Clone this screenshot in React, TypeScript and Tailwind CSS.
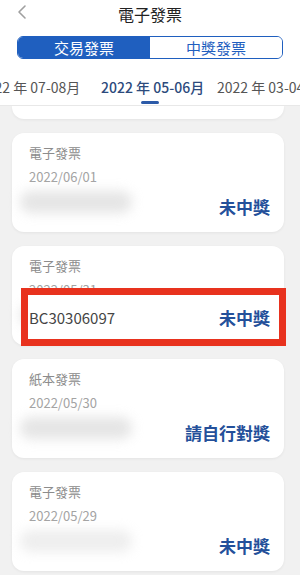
import React from "react";

const font = { fontFamily: '"Noto Sans CJK TC", "Noto Sans", Roboto, sans-serif' };

function Card({ kind, date, status, blurOpacity = "opacity-60" }: { kind: string; date: string; status: string; blurOpacity?: string }) {
  return (
    <div className="relative h-[99px] rounded-[12px] bg-white shadow-[0_1px_3px_rgba(0,0,0,0.06)] pl-[17px] pr-[14px] pt-[10px]">
      <div className="text-[13px] leading-[20px] text-[#8c8c8c]">{kind}</div>
      <div className="mt-[4px] text-[13px] leading-[20px] text-[#a3a3a3]">{date}</div>
      <div className={`absolute left-[8px] top-[58px] h-[22px] w-[112px] rounded-full bg-[#d4d4d4] blur-[6px] ${blurOpacity}`} />
      <div className="absolute right-[14px] top-[62px] text-[17px] font-bold leading-[24px] text-[#24509a]">{status}</div>
    </div>
  );
}

export default function App() {
  return (
    <div className="relative h-[575px] w-[300px] overflow-hidden bg-[#f1f1f1]" style={font}>
      <div className="bg-white">
        <div className="relative flex h-[28px] items-center justify-center">
          <svg className="absolute left-[17px] top-[4px]" width="10" height="16" viewBox="0 0 10 16" fill="none">
            <path d="M8 2 L2 8 L8 14" stroke="#a0a0a0" strokeWidth="1.6" strokeLinecap="round" strokeLinejoin="round" />
          </svg>
          <div className="text-[16px] leading-[22px] text-[#222]">電子發票</div>
        </div>
        <div className="px-[17px] pt-[8px]">
          <div className="flex h-[23px] overflow-hidden rounded-[6px] border border-[#1f5fbf]">
            <div className="flex flex-1 items-center justify-center bg-[#1f5fbf] text-[15px] leading-none text-white">交易發票</div>
            <div className="flex flex-1 items-center justify-center bg-white text-[15px] leading-none text-[#1f5fbf]">中獎發票</div>
          </div>
        </div>
        <div className="relative mt-[11px] h-[36px] overflow-hidden border-b border-[#e8e8e8]">
          <div className="absolute left-[-21px] top-[7px] whitespace-nowrap text-[14px] leading-[20px] text-[#555]">2022 年 07-08月</div>
          <div className="absolute left-[101px] top-[7px] whitespace-nowrap text-[14px] font-medium leading-[20px] text-[#2c4a7c]">2022 年 05-06月</div>
          <div className="absolute left-[217px] top-[7px] whitespace-nowrap text-[14px] leading-[20px] text-[#555]">2022 年 03-04月</div>
          <div className="absolute left-[141px] top-[31px] h-[3px] w-[18px] rounded-full bg-[#2c5aa8]" />
        </div>
      </div>
      <div className="flex flex-col gap-[14px] px-[12px] pr-[16px]">
        <div className="h-[13px] rounded-b-[12px] bg-white shadow-[0_1px_3px_rgba(0,0,0,0.06)]" />
        <Card kind="電子發票" date="2022/06/01" status="未中獎" />
        <Card kind="電子發票" date="2022/05/31" status="未中獎" />
        <Card kind="紙本發票" date="2022/05/30" status="請自行對獎" />
        <Card kind="電子發票" date="2022/05/29" status="未中獎" blurOpacity="opacity-40" />
      </div>
      <div className="absolute left-[21px] top-[288px] flex h-[58px] w-[265px] items-center justify-between border-[7px] border-[#e8321e] bg-white pl-[1px] pr-[9px]">
        <div className="text-[15px] leading-none text-[#444]">BC30306097</div>
        <div className="text-[17px] font-bold leading-none text-[#24509a]">未中獎</div>
      </div>
    </div>
  );
}
